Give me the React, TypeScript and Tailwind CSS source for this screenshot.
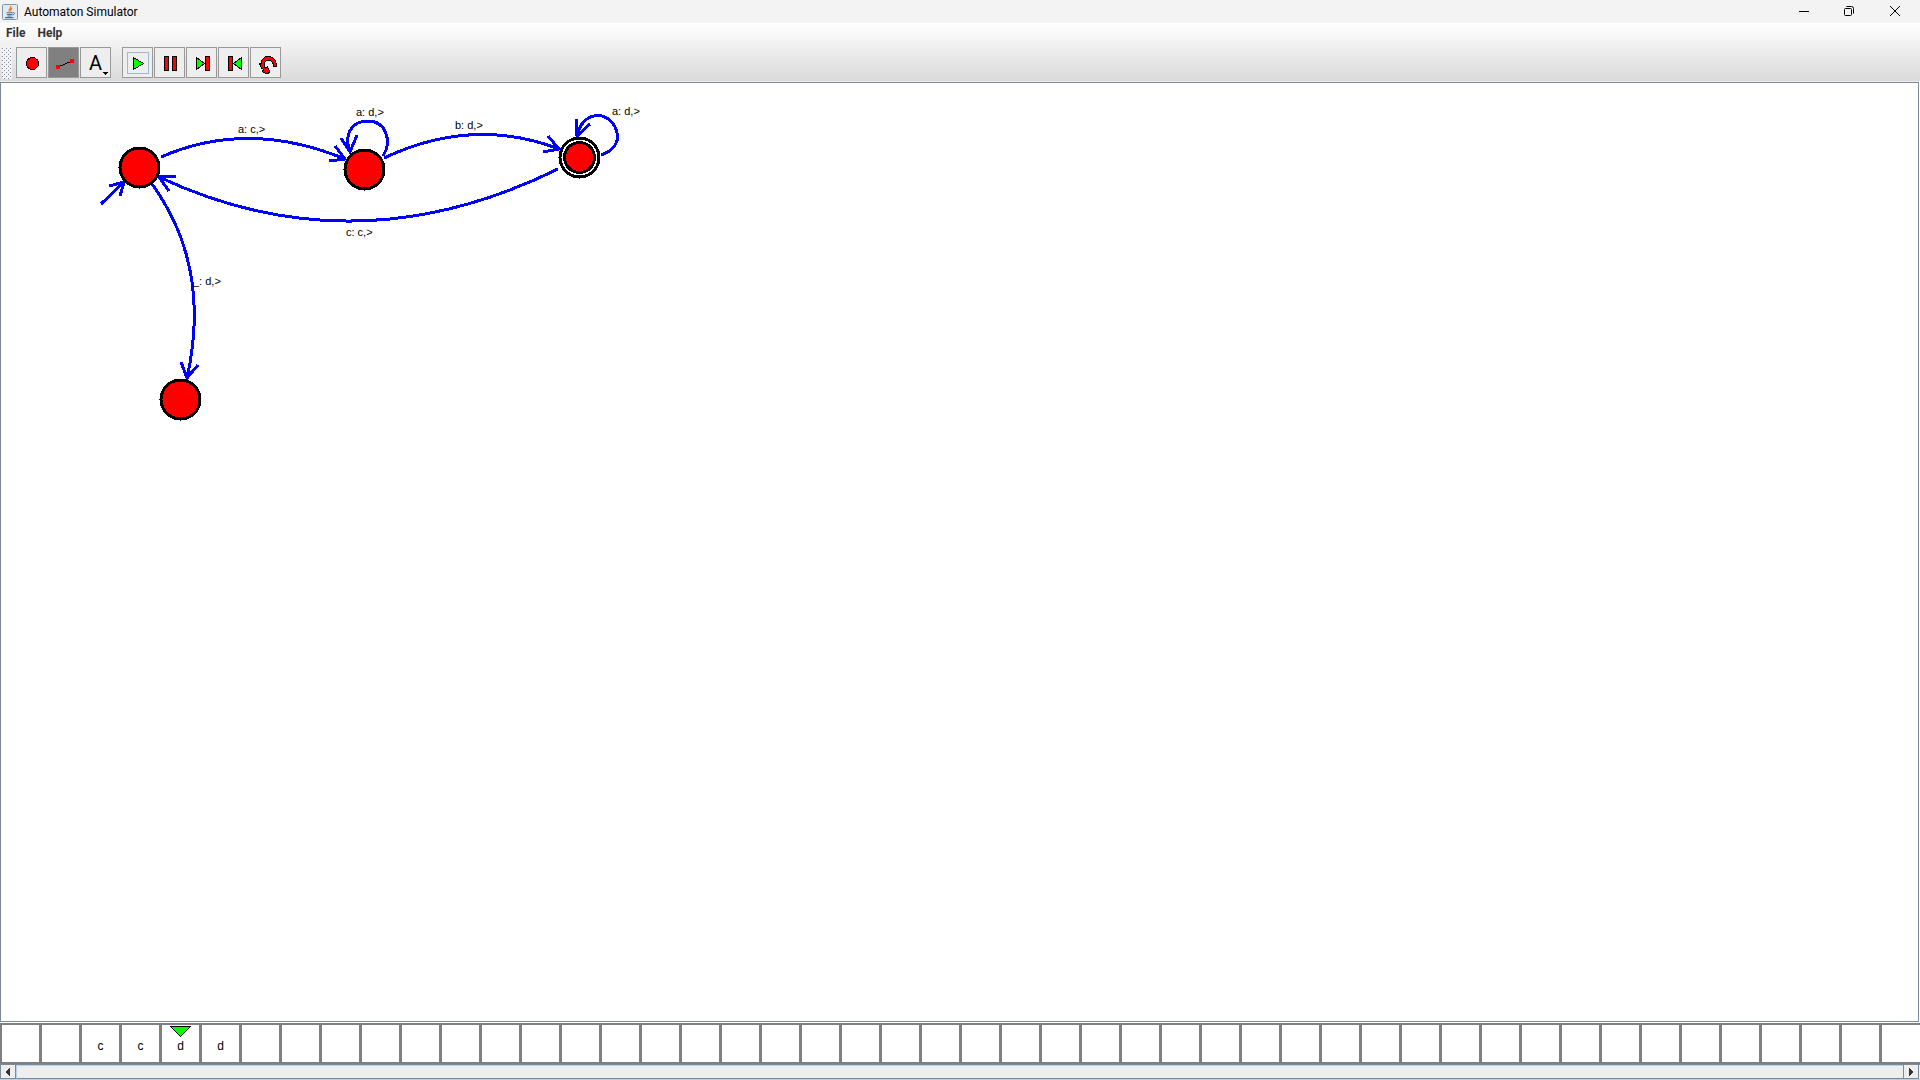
import React from "react";

const CELL_COUNT = 47;
const HEAD = 4;
const TAPE = ["", "", "c", "c", "d", "d"];

function JavaIcon() {
  return (
    <svg width="16" height="16" viewBox="0 0 16 16" aria-hidden="true">
      <rect x="0.5" y="0.5" width="15" height="15" rx="1" fill="#e3e9ee" stroke="#7f97ab" />
      <path d="M8.500 2C9.800 4 5.800 4.800 7.400 7.600M10.300 3.800C8 5 8.500 6 9 7.500" fill="none" stroke="#e8842a" strokeWidth="1.300" />
      <path d="M4.500 8.700H10.500M5 10.500H10M5.500 12H9.500M3 13.600H11.500" stroke="#47708f" strokeWidth="1.100" />
      <path d="M10.500 8.700C13.500 8 13 10.700 10.200 11" fill="none" stroke="#47708f" />
    </svg>
  );
}

function ToolButton({ label, active, children }: { label: string; active?: boolean; children: React.ReactNode }) {
  return (
    <button
      type="button"
      aria-label={label}
      aria-pressed={active}
      className={
        active
          ? "relative size-[31px] border border-[#999] bg-[#808080] text-black"
          : "relative size-[31px] border border-[#999] bg-[#eee] text-black"
      }
    >
      {children}
    </button>
  );
}

function Icon({ children }: { children: React.ReactNode }) {
  return (
    <svg width="29" height="29" viewBox="1 1 29 29" shapeRendering="crispEdges" aria-hidden="true">
      {children}
    </svg>
  );
}

function Toolbar() {
  return (
    <div role="toolbar" className="flex h-[35px] items-start gap-px pt-px pl-0.5">
      <svg width="10" height="32" className="mr-[3px]" shapeRendering="crispEdges" aria-hidden="true">
        <defs>
          <pattern id="grip" width="4" height="4" patternUnits="userSpaceOnUse">
            <rect width="4" height="4" fill="#f4f4f4" />
            <rect x="0" y="1" width="1" height="1" fill="#7a8a99" />
            <rect x="2" y="3" width="1" height="1" fill="#7a8a99" />
          </pattern>
        </defs>
        <rect width="10" height="32" fill="url(#grip)" />
      </svg>
      <ToolButton label="State">
        <Icon>
          <circle cx="16.5" cy="16.5" r="6" fill="#f00" stroke="#000" />
        </Icon>
      </ToolButton>
      <ToolButton label="Transition" active>
        <Icon>
          <path d="M10 20L24 14" stroke="#000" />
          <path d="M8 18h4v4h-4zM22 12h4v4h-4z" fill="#f00" />
        </Icon>
      </ToolButton>
      <ToolButton label="Label">
        <span className="flex h-full items-center justify-center font-['Roboto'] text-xl leading-none">A</span>
        <svg width="6" height="3" className="absolute right-[2px] bottom-[2px]" shapeRendering="crispEdges" aria-hidden="true">
          <path d="M0 0H6L3 3Z" />
        </svg>
      </ToolButton>
      <div className="w-[9px]" />
      <ToolButton label="Play">
        <Icon>
          <rect x="5.5" y="5.5" width="21" height="21" fill="none" stroke="#a3b8cc" />
          <path d="M11.500 10.500L21.500 16.500L11.500 22.500Z" fill="#0f0" stroke="#000" />
        </Icon>
      </ToolButton>
      <ToolButton label="Pause">
        <Icon>
          <path d="M10.500 9.500h4v14h-4zM18.500 9.500h4v14h-4z" fill="#f00" stroke="#000" />
        </Icon>
      </ToolButton>
      <ToolButton label="Step forward">
        <Icon>
          <path d="M10.500 10.500L18.500 16.500L10.500 22.500Z" fill="#0f0" stroke="#000" />
          <path d="M19.500 9.500h4v14h-4z" fill="#f00" stroke="#000" />
        </Icon>
      </ToolButton>
      <ToolButton label="Step back">
        <Icon>
          <path d="M23.500 10.500L15.500 16.500L23.500 22.500Z" fill="#0f0" stroke="#000" />
          <path d="M10.500 9.500h4v14h-4z" fill="#f00" stroke="#000" />
        </Icon>
      </ToolButton>
      <ToolButton label="Reset">
        <Icon>
          <path
            d="M26.500 19.500H23.500C23.500 15 21.500 13.500 18.500 13.500C15.500 13.500 14 15.500 14 18C14 19.500 14.500 20.500 15.500 21L17.500 19.500L19.500 24.500L18.500 26.500H15.500L12.500 24.500L13.500 22.500C11.500 21.500 10.500 20 10.500 17.500L9.500 17L11.500 16C11.500 12 14.500 9.500 18.500 9.500C23.500 9.500 26.500 13.500 26.500 19.500Z"
            fill="#f00"
            stroke="#000"
          />
        </Icon>
      </ToolButton>
    </div>
  );
}

const EDGES = [
  "M161 157Q248 119 345 159M335 146L345 159L329 161",
  "M383 156C393 140 385 121 368 121C350 121 344 136 350 152M341 138L350 152L357 135",
  "M384 158Q473 116 559 149M548 136L559 149L543 152",
  "M601 155C616 150 621 139 615 127C607 110 582 111 577 136M576 119L577 136L590 124",
  "M558 169Q355 269 159 177M176 176L159 177L169 191",
  "M152 184Q212 267 187 378M181 362L187 378L198 365",
  "M101 204L124 182M109 186L124 182L120 196",
];

const STATES = [
  { x: 139.5, y: 167.5 },
  { x: 364.5, y: 169.5 },
  { x: 579.5, y: 157.5, accepting: true },
  { x: 180.5, y: 399.5 },
];

const LABELS = [
  { x: 238, y: 133, text: "a: c,>" },
  { x: 356, y: 116, text: "a: d,>" },
  { x: 455, y: 129, text: "b: d,>" },
  { x: 612, y: 115, text: "a: d,>" },
  { x: 346, y: 236, text: "c: c,>" },
  { x: 193, y: 285, text: "_: d,>" },
];

function Diagram() {
  return (
    <svg width="700" height="450" viewBox="1 83 700 450" className="block" role="img" aria-label="Automaton">
      <g fill="none" stroke="#00f" strokeWidth="3" shapeRendering="crispEdges">
        {EDGES.map((d) => (
          <path key={d} d={d} />
        ))}
      </g>
      <g fill="#f00" stroke="#000" strokeWidth="3" shapeRendering="crispEdges">
        {STATES.map((s) => (
          <g key={s.x}>
            <circle cx={s.x} cy={s.y} r="19.5" fill={s.accepting ? "#fff" : "#f00"} />
            {s.accepting && <circle cx={s.x} cy={s.y} r="15" />}
          </g>
        ))}
      </g>
      <g className="font-['Liberation_Sans'] text-[11px]" fill="#000">
        {LABELS.map((l) => (
          <text key={l.x} x={l.x} y={l.y}>
            {l.text}
          </text>
        ))}
      </g>
    </svg>
  );
}

function Tape() {
  return (
    <div className="mt-px flex h-[41px] shrink-0 overflow-hidden border-y-2 border-[#808080] bg-white font-['Liberation_Sans'] text-xs text-black">
      <div className="relative flex w-[39px] shrink-0 border-l-2 border-[#808080]" />
      {Array.from({ length: CELL_COUNT }, (_, i) => i + 1).map((i) => (
        <div key={i} className="relative flex w-10 shrink-0 items-center justify-center border-l-[3px] border-[#808080] pt-1">
          {i === HEAD && (
            <svg width="21" height="12" className="absolute top-px left-2" shapeRendering="crispEdges" aria-hidden="true">
              <path d="M0.500 0.500H20.500L10.500 10.500Z" fill="#0f0" stroke="#000" />
            </svg>
          )}
          {TAPE[i]}
        </div>
      ))}
    </div>
  );
}

function ScrollBar() {
  return (
    <div className="flex h-4 shrink-0 border-t border-b border-t-[#7a8a99] border-b-[#b8cfe5] bg-[#eee]">
      <button type="button" aria-label="Scroll left" className="flex w-4 items-center justify-center border-x border-b border-[#7a8a99] bg-[#eee] pr-px">
        <svg width="5" height="8" shapeRendering="crispEdges" aria-hidden="true">
          <path d="M5 0V8L0 4Z" fill="#333" />
        </svg>
      </button>
      <div className="flex-1 border-t border-b border-l border-t-[#b8cfe5] border-b-[#7a8a99] border-l-[#b8cfe5]" />
      <button type="button" aria-label="Scroll right" className="mr-px flex w-4 items-center justify-center border-x border-b border-[#7a8a99] bg-[#eee] pl-px">
        <svg width="5" height="8" shapeRendering="crispEdges" aria-hidden="true">
          <path d="M0 0V8L5 4Z" fill="#333" />
        </svg>
      </button>
    </div>
  );
}

export default function App() {
  return (
    <div className="flex h-screen flex-col overflow-hidden bg-white">
      <header className="flex h-[23px] shrink-0 items-center bg-[#f3f3f3] pl-0.5 text-black">
        <JavaIcon />
        <h1 className="ml-1.5 font-['Roboto'] text-xs leading-none">Automaton Simulator</h1>
        <div className="ml-auto flex h-full items-center pb-0.5">
          <button type="button" aria-label="Minimize" className="flex h-full w-[45px] items-center justify-center">
            <svg width="10" height="10" shapeRendering="crispEdges" aria-hidden="true">
              <path d="M0 5.500H10" stroke="#000" />
            </svg>
          </button>
          <button type="button" aria-label="Restore" className="flex h-full w-[45px] items-center justify-center">
            <svg width="10" height="10" fill="none" stroke="#000" aria-hidden="true">
              <rect x="0.500" y="2.500" width="7" height="7" rx="1" />
              <path d="M2.500 0.500H7.500Q9.500 0.500 9.500 2.500V7.500" />
            </svg>
          </button>
          <button type="button" aria-label="Close" className="mr-0.5 flex h-full w-[47px] items-center justify-center">
            <svg width="10" height="10" stroke="#000" aria-hidden="true">
              <path d="M0 0L10 10M10 0L0 10" />
            </svg>
          </button>
        </div>
      </header>
      <div className="shrink-0 border-b border-[#eee] bg-linear-to-b from-white to-[#dadada]">
        <nav className="flex h-[23px] items-center gap-3 pb-1 pl-1.5 font-['Roboto'] text-xs font-bold text-[#333]">
          <button type="button">File</button>
          <button type="button">Help</button>
        </nav>
        <Toolbar />
      </div>
      <main className="mr-px min-h-0 flex-1 overflow-hidden border border-[#7a8a99] bg-white">
        <Diagram />
      </main>
      <Tape />
      <ScrollBar />
    </div>
  );
}
